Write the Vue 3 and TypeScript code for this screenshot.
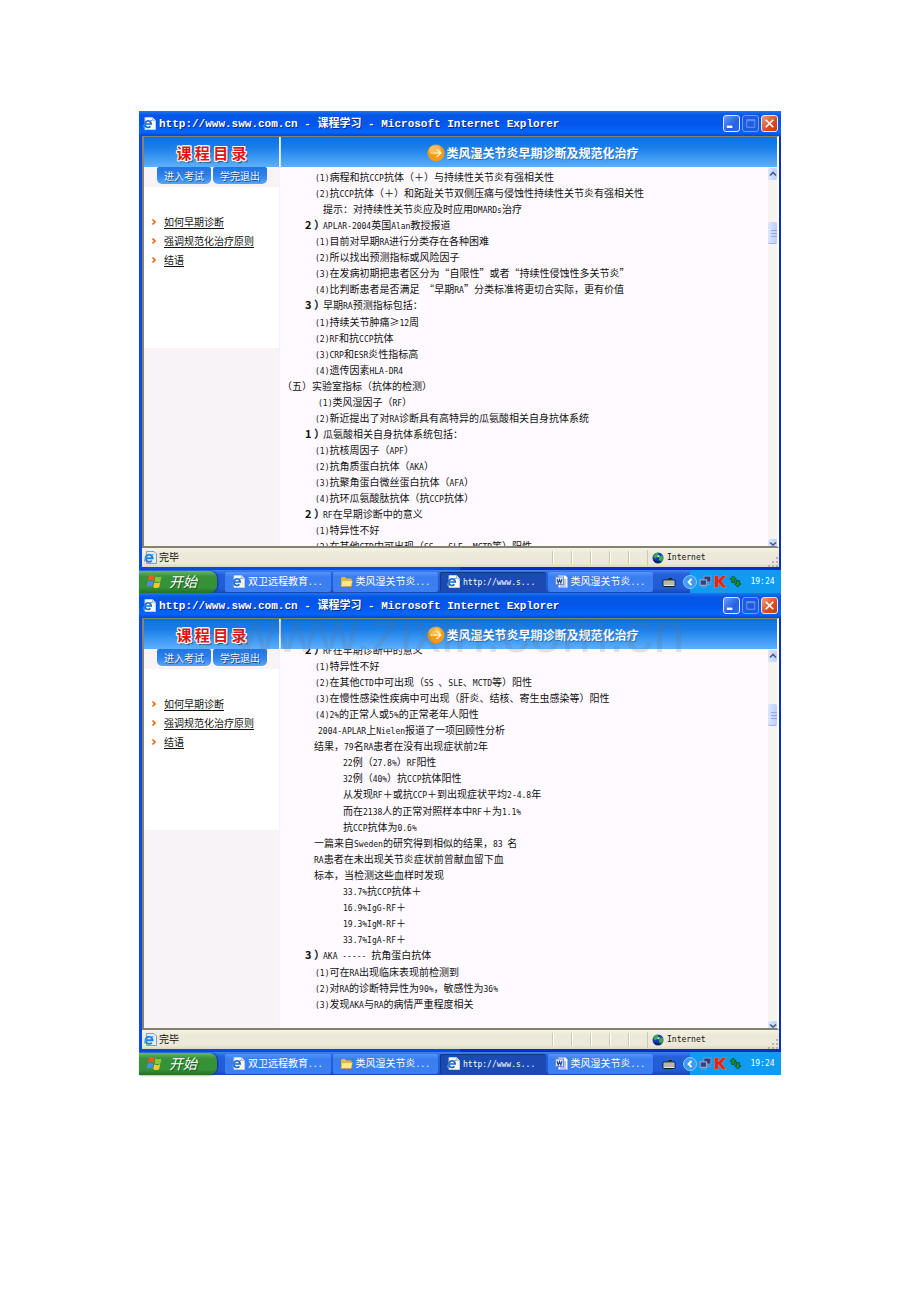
<script setup lang="ts">
type Kind = 'item' | 'hint' | 'head' | 'section' | 'inset' | 'plain' | 'deep' | 'note'
interface Row { kind: Kind; text: string; num?: string; gap?: boolean }
interface Pane { id: string; scrolled: boolean; rows: Row[] }

const r = (kind: Kind, text: string, num?: string): Row => ({ kind, text, num })

const panes: Pane[] = [
  {
    id: 'first',
    scrolled: false,
    rows: [
      r('item', '(1)病程和抗CCP抗体（＋）与持续性关节炎有强相关性'),
      r('item', '(2)抗CCP抗体（＋）和跖趾关节双侧压痛与侵蚀性持续性关节炎有强相关性'),
      r('hint', '提示：对持续性关节炎应及时应用DMARDs治疗'),
      r('head', 'APLAR-2004英国Alan教授报道', '2'),
      r('item', '(1)目前对早期RA进行分类存在各种困难'),
      r('item', '(2)所以找出预测指标或风险因子'),
      r('item', '(3)在发病初期把患者区分为“自限性”或者“持续性侵蚀性多关节炎”'),
      r('item', '(4)比判断患者是否满足 “早期RA”分类标准将更切合实际，更有价值'),
      r('head', '早期RA预测指标包括：', '3'),
      { kind: 'item', text: '(1)持续关节肿痛≥12周', gap: true },
      r('item', '(2)RF和抗CCP抗体'),
      r('item', '(3)CRP和ESR炎性指标高'),
      r('item', '(4)遗传因素HLA-DR4'),
      r('section', '（五）实验室指标（抗体的检测）'),
      r('inset', '(1)类风湿因子（RF）'),
      r('item', '(2)新近提出了对RA诊断具有高特异的瓜氨酸相关自身抗体系统'),
      r('head', '瓜氨酸相关自身抗体系统包括：', '1'),
      r('item', '(1)抗核周因子（APF）'),
      r('item', '(2)抗角质蛋白抗体（AKA）'),
      r('item', '(3)抗聚角蛋白微丝蛋白抗体（AFA）'),
      r('item', '(4)抗环瓜氨酸肽抗体（抗CCP抗体）'),
      r('head', 'RF在早期诊断中的意义', '2'),
      r('item', '(1)特异性不好'),
      r('item', '(2)在其他CTD中可出现（SS 、SLE、MCTD等）阳性'),
    ],
  },
  {
    id: 'second',
    scrolled: true,
    rows: [
      r('head', 'RF在早期诊断中的意义', '2'),
      r('item', '(1)特异性不好'),
      r('item', '(2)在其他CTD中可出现（SS 、SLE、MCTD等）阳性'),
      r('item', '(3)在慢性感染性疾病中可出现（肝炎、结核、寄生虫感染等）阳性'),
      r('item', '(4)2%的正常人或5%的正常老年人阳性'),
      r('note', '2004-APLAR上Nielen报道了一项回顾性分析'),
      r('plain', '结果，79名RA患者在没有出现症状前2年'),
      r('deep', '22例（27.8%）RF阳性'),
      r('deep', '32例（40%）抗CCP抗体阳性'),
      r('deep', '从发现RF＋或抗CCP＋到出现症状平均2-4.8年'),
      { kind: 'deep', text: '而在2138人的正常对照样本中RF＋为1.1%', gap: true },
      r('deep', '抗CCP抗体为0.6%'),
      r('plain', '一篇来自Sweden的研究得到相似的结果，83 名'),
      r('plain', 'RA患者在未出现关节炎症状前曾献血留下血'),
      r('plain', '标本，当检测这些血样时发现'),
      r('deep', '33.7%抗CCP抗体＋'),
      r('deep', '16.9%IgG-RF＋'),
      r('deep', '19.3%IgM-RF＋'),
      r('deep', '33.7%IgA-RF＋'),
      r('head', 'AKA ----- 抗角蛋白抗体', '3'),
      { kind: 'item', text: '(1)可在RA出现临床表现前检测到', gap: true },
      r('item', '(2)对RA的诊断特异性为90%，敏感性为36%'),
      r('item', '(3)发现AKA与RA的病情严重程度相关'),
    ],
  },
]

const links: string[] = ['如何早期诊断', '强调规范化治疗原则', '结语']
const tasks = [
  { icon: 'ie', text: '双卫远程教育...', active: false },
  { icon: 'folder', text: '类风湿关节炎...', active: false },
  { icon: 'ie', text: 'http://www.s...', active: true },
  { icon: 'word', text: '类风湿关节炎...', active: false },
]

// Splits a line into Latin and Chinese runs so each gets its own face.
const runs = (text: string) =>
  (text.match(/[\x20-\x7e]+|[^\x20-\x7e]+/g) ?? []).map((t) => ({ t, latin: /^[\x20-\x7e]/.test(t) }))
</script>

<template>
  <svg class="defs" aria-hidden="true">
    <symbol id="ie" viewBox="0 0 13 13">
      <path d="M2 .5h7.500l3 3v9H2z" fill="#f5f7f4" stroke="#c3ccd5" />
      <path d="M9.500.5v3h3" fill="#cfd9e4" stroke="#8fa4bd" stroke-width=".6" />
      <path d="M1.800 7h6.400A3.200 3.300 0 1 0 7.400 9.400" fill="none" stroke="#1b67c4" stroke-width="1.700" />
      <path d="M.6 10.500C0 7 5 3 9 3.600" fill="none" stroke="#3f9be8" />
    </symbol>
    <symbol id="iepage" viewBox="0 0 13 13">
      <path d="M2.500.5h7.500l2.500 2.500v9.500h-10z" fill="#e4eefb" stroke="#7f9cc8" />
      <path d="M2 7.200h6.600A3.500 3.600 0 1 0 7.800 9.600" fill="none" stroke="#1f7fd6" stroke-width="1.900" />
      <path d="M.6 10.800C0 7 5 3 9.500 3.400" fill="none" stroke="#49a6ee" />
    </symbol>
    <symbol id="folder" viewBox="0 0 13 13">
      <path d="M1 3.500Q1 2 2.500 2H5l1.500 1.500h5V11H1z" fill="#e9b93c" />
      <path d="M2 5.500h10.500L11.300 11.500H1z" fill="#ffe98a" stroke="#c9951e" stroke-width=".5" />
    </symbol>
    <symbol id="word" viewBox="0 0 13 13">
      <path d="M3.500.5h7l2 2v10h-9z" fill="#f7f9ff" stroke="#9fb2d8" />
      <path d="M9 5h2M9 7h2M9 9h2M5 11h6" stroke="#7f95c4" />
      <rect x=".5" y="2" width="8" height="7.500" fill="#dfe8fb" stroke="#6f8cc8" />
      <path d="M2 4l1.200 4 1.300-3.500L5.800 8 7 4" fill="none" stroke="#27499b" stroke-width="1.100" />
    </symbol>
    <symbol id="flag" viewBox="0 0 16 16">
      <path d="M2.800 2.600Q5.500 1 8 2.600L7.100 7.300Q4.500 5.800 1.800 7.300z" fill="#ee5a26" />
      <path d="M8.900 3Q11.500 4.500 14.600 3.200L13.600 7.900Q10.800 9.200 8 7.700z" fill="#8cc63a" />
      <path d="M1.600 8.200Q4.400 6.800 6.900 8.200L6 12.900Q3.500 11.400.6 12.900z" fill="#4a8df0" />
      <path d="M7.800 8.600Q10.500 10.100 13.400 8.800L12.400 13.500Q9.700 14.800 6.900 13.300z" fill="#fbc92c" />
    </symbol>
    <symbol id="arrow" viewBox="0 0 18 18">
      <circle cx="9" cy="9" r="8.500" fill="#f59a12" />
      <ellipse cx="8" cy="6" rx="6" ry="4.500" fill="#ffc04c" />
      <path d="M3.500 9h2M6.500 9h6.500M9.500 5l4.500 4-4.500 4" fill="none" stroke="#fff3d6" stroke-width="1.200" />
    </symbol>
    <symbol id="globe" viewBox="0 0 12 12">
      <circle cx="6" cy="6" r="5.500" fill="#1838b8" />
      <path d="M1.500 3.500Q4 0 6.500 1.500L6 4 3.500 6.500 1.500 5zM7 5l3-2Q12 6 10 9.500L7 8z" fill="#35b13c" />
      <path d="M1 8q3 4.500 8 2L6 9z" fill="#0a1c50" />
      <path d="M5 4l2-1 1 1-2 1.500z" fill="#c5e6ff" />
    </symbol>
    <symbol id="keyboard" viewBox="0 0 14 10">
      <path d="M7 3V1.500h3" fill="none" stroke="#101828" />
      <rect x="1" y="3" width="12" height="6.500" rx="1" fill="#e9e9e1" stroke="#10182c" />
      <path d="M2.500 5h9M2.500 7h9" stroke="#222" stroke-dasharray="1 1" />
    </symbol>
    <symbol id="net" viewBox="0 0 12 12">
      <rect x="4.500" y="1" width="6.500" height="5.500" fill="#2c3d7c" stroke="#8794c4" />
      <rect x="1" y="4.500" width="6" height="5" fill="#33437f" stroke="#a4aed0" />
      <path d="M2 11h5M8 8.500h3" stroke="#8e98ba" />
    </symbol>
    <symbol id="kav" viewBox="0 0 12 12">
      <path d="M.5.500h3.500v4L8 .5h3.500L7 5.800 11.500 11.500H8L4 7v4.500H.5z" fill="#e81f18" stroke="#f6a04a" stroke-width=".4" />
    </symbol>
    <symbol id="sync" viewBox="0 0 14 13">
      <path d="M4.500.5L8 4H6.300v3.500H2.800V4H1zM9.500 12.500L13 9h-1.800V5.500H7.800V9H6z" fill="#1b8f26" stroke="#073d14" stroke-width=".7" />
    </symbol>
  </svg>

  <main class="page">
    <section v-for="pane in panes" :key="pane.id" class="screen">
      <header class="titlebar">
        <svg class="ico"><use href="#ie" /></svg>
        <h1>http://www.sww.com.cn - <span>课程学习</span> - Microsoft Internet Explorer</h1>
        <div class="controls">
          <button aria-label="最小化" class="ctl"><svg viewBox="0 0 16 16"><path d="M3 11.500h6" stroke="#fff" stroke-width="2.500" /></svg></button>
          <button aria-label="最大化" class="ctl dim"><svg viewBox="0 0 16 16"><path d="M4 4h8.500v8H4zM4 5h8.500" fill="none" stroke="#6f9bf0" /></svg></button>
          <button aria-label="关闭" class="ctl close"><svg viewBox="0 0 16 16"><path d="M4 4l8 8M12 4l-8 8" stroke="#fff" stroke-width="1.800" /></svg></button>
        </div>
      </header>

      <div class="frame">
        <div class="view">
          <aside class="side">
            <div class="banner"><h2 class="logo">课 程 目 录</h2></div>
            <div class="actions">
              <button>进入考试</button>
              <button>学完退出</button>
            </div>
            <nav class="toc">
              <ul>
                <li v-for="l in links" :key="l">
                  <svg viewBox="0 0 4 6"><path d="M.5.5L3 3 .5 5.500" fill="none" stroke="#f26a10" stroke-width="1.600" /></svg>
                  <a href="#">{{ l }}</a>
                </li>
              </ul>
            </nav>
          </aside>
          <article class="lesson">
            <div class="banner">
              <svg class="badge"><use href="#arrow" /></svg>
              <h2 class="topic">类风湿关节炎早期诊断及规范化治疗</h2>
            </div>
            <div class="scroll">
              <div class="lines" :class="{ scrolled: pane.scrolled }">
                <p v-for="(row, i) in pane.rows" :key="i" :class="[row.kind, { gap: row.gap }]">
                  <b v-if="row.num"><i>{{ row.num }}</i><i>）</i></b><span v-for="(run, k) in runs(row.text)" :key="k" :class="{ latin: run.latin }">{{ run.t }}</span>
                </p>
              </div>
              <div class="bar">
                <span class="cap"><svg viewBox="0 0 9 12"><path d="M2 7.500L5 4.500l3 3" fill="none" stroke="#435a8c" stroke-width="1.600" /></svg></span>
                <span class="thumb"><svg viewBox="0 0 9 22"><path d="M3 8.500h6M3 11.500h6M3 14.500h6" stroke="#8da9ec" /></svg></span>
                <span class="cap low"><svg viewBox="0 0 9 7"><path d="M2 3.500L5 6l3-2.500" fill="none" stroke="#435a8c" stroke-width="1.600" /></svg></span>
              </div>
            </div>
          </article>
        </div>
        <footer class="status">
          <svg class="ico"><use href="#iepage" /></svg>
          <span class="done">完毕</span>
          <span v-for="n in 5" :key="n" class="cell"></span>
          <span class="zone"><svg><use href="#globe" /></svg><span>Internet</span></span>
          <svg class="grip" viewBox="0 0 10 10"><path d="M8 1h2M8 5h2M4 5h2M8 9h2M4 9h2M0 9h2" stroke="#b8b4a2" stroke-width="2" /></svg>
        </footer>
      </div>

      <footer class="taskbar">
        <button class="start"><svg><use href="#flag" /></svg><em>开始</em></button>
        <div class="tasks">
          <button v-for="(t, i) in tasks" :key="i" :class="{ active: t.active }">
            <svg><use :href="'#' + t.icon" /></svg>
            <span><span v-for="(run, k) in runs(t.text)" :key="k" :class="{ latin: run.latin }">{{ run.t }}</span></span>
          </button>
        </div>
        <svg class="kbd"><use href="#keyboard" /></svg>
        <div class="tray">
          <button class="more" aria-label="显示隐藏的图标"><svg viewBox="0 0 14 14"><circle cx="7" cy="7" r="6.500" fill="#3d9bf5" stroke="#8cc8ff" /><path d="M8.500 4L5.500 7l3 3" fill="none" stroke="#fff" stroke-width="1.800" /></svg></button>
          <svg class="t"><use href="#net" /></svg>
          <svg class="t"><use href="#kav" /></svg>
          <svg class="t"><use href="#sync" /></svg>
          <time>19:24</time>
        </div>
      </footer>

      <div v-if="pane.scrolled" class="mark" aria-hidden="true">www.zixin.com.cn</div>
    </section>
  </main>
</template>

<style>
body { background: #fff; }
</style>

<style scoped>
* { box-sizing: border-box; }
h1, h2, p, ul { margin: 0; padding: 0; }
ul { list-style: none; }
button { border: 0; padding: 0; margin: 0; background: none; font: inherit; color: inherit; }
svg { display: block; flex: none; }
.defs { position: absolute; width: 0; height: 0; }
.page { padding: 111px 139px 224px; font-family: "Noto Sans CJK SC", sans-serif; font-size: 10px; line-height: 16px; color: #111; }
.screen { position: relative; background: #0a2fb8; }
.latin { font-family: "DejaVu Sans Mono", monospace; font-size: 8px; }
.ico { width: 13px; height: 13px; }

.titlebar { display: flex; align-items: center; gap: 3px; height: 25px; padding: 0 3px 0 4px; color: #fff; background: linear-gradient(#1f74f2 0, #0557e6 16%, #0356ea 50%, #0465fd 85%, #0347d0); }
.titlebar h1 { flex: 1; min-width: 0; white-space: nowrap; overflow: hidden; font: bold 11px/20px "Liberation Mono", "Noto Sans CJK SC", monospace; text-shadow: 1px 1px #0a2a80; }
.controls { display: flex; gap: 2px; }
.ctl { width: 17px; height: 17px; border: 1px solid #dfe9ff; border-radius: 3px; background: linear-gradient(135deg, #6b9bf8, #2660e4 60%, #2a6cf0); }
.ctl svg { width: 15px; height: 15px; }
.dim { border-color: #6f9bf0; background: #1f5be0; }
.close { background: linear-gradient(135deg, #f09a7c, #dd4a22 60%, #c93a12); }

.frame { padding: 0 2px 3px 3px; background: linear-gradient(90deg, #0b49e0 50%, #0a2fc0 50%); border-bottom: 0; }
.view { display: grid; grid-template-columns: 136px 1fr; height: 412px; overflow: hidden; border-style: solid; border-color: #85816f #fff #85816f #85816f; border-width: 1px 2px 2px 2px; background: #fefaff; }
.side { min-width: 0; background: #f7f3f7; border-right: 1px solid #f2f1fd; }
.lesson { min-width: 0; }
.banner { display: flex; align-items: center; justify-content: center; height: 30px; padding-top: 1px; background: linear-gradient(#0a70e0, #1b7fe8 35%, #5cb0fe); }
.lesson .banner { border-left: 1px solid #cfe5fb; gap: 1px; padding-left: 8px; }
.badge { width: 18px; height: 18px; }
.topic { font-size: 12px; line-height: 18px; color: #fff; text-shadow: 1px 1px #2a6fc0; white-space: nowrap; }
.logo { font-size: 15px; line-height: 18px; color: #e01414; white-space: nowrap; text-shadow: 1px 0 #fff, -1px 0 #fff, 0 1px #fff, 0 -1px #fff, 1px 1px #fff, -1px -1px #fff, 1px -1px #fff, -1px 1px #fff, 2px 2px 1px #345; }
.actions { display: flex; gap: 2px; height: 20px; padding-left: 13px; }
.actions button { width: 54px; height: 17px; border-radius: 2px 2px 5px 5px; background: linear-gradient(#2273e0, #2c82ee 50%, #55a6fb); color: #eef6ff; line-height: 15px; text-shadow: 1px 1px #1a4f9a; }
.toc { height: 161px; padding: 25px 0 0 8px; background: #fff; }
.toc li { display: flex; align-items: center; gap: 8px; height: 19px; }
.toc svg { width: 4px; height: 6px; }
.toc a { color: #111; text-decoration: underline; text-underline-offset: 2px; white-space: nowrap; }

.scroll { display: grid; grid-template-columns: 1fr 9px; grid-template-rows: 100%; height: 379px; overflow: hidden; }
.lines { min-width: 0; padding-top: 2px; }
.scrolled { margin-top: -9px; }
.lines p { height: 16px; white-space: nowrap; }
.lines p span { white-space: pre; }
.lines .gap { margin-top: 1px; }
.lines .item { padding-left: 35px; }
.lines .hint { padding-left: 43px; }
.lines .head { padding-left: 25px; }
.lines .section { padding-left: 2px; }
.lines .inset { padding-left: 38px; }
.lines .plain { padding-left: 34px; }
.lines .note { padding-left: 38px; }
.lines .deep { padding-left: 63px; }
.head b { display: inline-flex; font-size: 11px; line-height: 15px; vertical-align: top; }
.head i { width: 9px; font-style: normal; }
.bar { display: flex; flex-direction: column; background: #f5f4ef; }
.cap, .thumb { border-radius: 2px; background: linear-gradient(90deg, #dce6fd, #bccffb); }
.cap { height: 12px; margin-top: 1px; }
.cap svg { width: 9px; height: 12px; }
.thumb { height: 22px; margin-top: 42px; border-bottom: 1px solid #9db5e8; }
.thumb svg { width: 9px; height: 22px; }
.cap.low { height: 7px; margin-top: auto; }
.low svg { height: 7px; }

.status { display: flex; align-items: center; height: 19px; padding: 0 1px 0 2px; background: linear-gradient(#f5f3e8, #ece9d8 30%, #ece9d8 80%, #dcd8c4); }
.done { flex: 1; padding-left: 2px; line-height: 14px; padding-bottom: 2px; }
.cell { width: 19px; height: 13px; border-left: 1px solid #cbc8b6; box-shadow: inset 1px 0 #fff; }
.zone { display: flex; align-items: center; gap: 3px; width: 121px; padding-left: 4px; border-left: 1px solid #cbc8b6; font-family: "DejaVu Sans Mono", monospace; font-size: 8px; }
.zone svg { width: 12px; height: 12px; }
.grip { width: 10px; height: 10px; align-self: flex-end; }

.taskbar { display: flex; align-items: center; height: 23px; color: #fff; background: linear-gradient(#3b82f0, #2460dc 20%, #215bd6 80%, #1a47b0); }
.start { display: flex; align-items: center; gap: 6px; width: 78px; height: 22px; padding-left: 7px; border-radius: 0 8px 8px 0; background: linear-gradient(#6ab566, #37923a 25%, #359236 75%, #24702a); box-shadow: 1px 0 2px #0c3580; }
.start svg { width: 17px; height: 17px; }
.start em { font-size: 14px; line-height: 20px; padding-bottom: 2px; text-shadow: 1px 1px 1px #184c1a; }
.tasks { flex: 1; display: grid; grid-template-columns: repeat(4, 1fr); gap: 2px; min-width: 0; padding: 0 9px 0 8px; }
.tasks button { display: flex; align-items: center; gap: 3px; height: 20px; min-width: 0; padding-left: 7px; border-radius: 2px; background: linear-gradient(#5496fa, #3a7df0 25%, #3b80f2); white-space: nowrap; overflow: hidden; }
.tasks .active { background: #1b4ab2; box-shadow: inset 1px 1px #123685; }
.tasks svg { width: 13px; height: 13px; }
.kbd { width: 14px; height: 10px; margin-right: 7px; }
.tray { display: flex; align-items: center; gap: 2px; width: 98px; height: 23px; background: linear-gradient(90deg, transparent 7px, #0f9bf0 7px); }
.tray .t { width: 13px; height: 13px; }
.more svg { width: 14px; height: 14px; }
.tray time { flex: 1; text-align: center; font-family: "DejaVu Sans Mono", monospace; font-size: 8px; }

.mark { position: absolute; top: 11px; left: 0; right: 0; text-align: center; font: 57px/57px "Liberation Sans", sans-serif; color: rgb(110 110 120 / 20%); pointer-events: none; white-space: nowrap; }
</style>
